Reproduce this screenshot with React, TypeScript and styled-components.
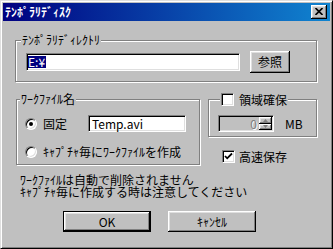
import React from "react";
import styled, { createGlobalStyle, css } from "styled-components";

const FONT = `"Noto Sans CJK JP", "Noto Sans", sans-serif`;

const GlobalStyle = createGlobalStyle`
    html, body {
        margin: 0;
        padding: 0;
        background: #c0c0c0;
    }
    body {
        font-family: ${FONT};
        font-size: 12px;
        color: #000;
    }
    * {
        box-sizing: border-box;
    }
`;

const raised = css`
    background: #c0c0c0;
    box-shadow:
        inset -1px -1px #000,
        inset 1px 1px #fff,
        inset -2px -2px #808080,
        inset 2px 2px #dfdfdf;
`;

const sunken = css`
    border: 1px solid;
    border-color: #808080 #fff #fff #808080;
    box-shadow:
        inset 1px 1px #000,
        inset -1px -1px #dfdfdf;
`;

const Window = styled.div`
    width: 333px;
    height: 249px;
    background: #c0c0c0;
    border: 1px solid;
    border-color: #dfdfdf #000 #000 #dfdfdf;
    padding: 2px;
    box-shadow:
        inset 1px 1px #fff,
        inset -1px -1px #808080;
    display: flex;
    flex-direction: column;
`;

const TitleBar = styled.div`
    height: 18px;
    flex-shrink: 0;
    display: flex;
    align-items: center;
    justify-content: space-between;
    padding: 0 3px 0 2px;
    background: linear-gradient(90deg, #000080, #1084d0);
`;

const Title = styled.span`
    color: #fff;
    font-weight: bold;
    line-height: 12px;
`;

const CloseBtn = styled.div`
    ${raised};
    width: 16px;
    height: 14px;
    display: flex;
    align-items: center;
    justify-content: center;
    svg {
        margin: -1px 0 0 -1px;
    }
`;

const Body = styled.div`
    display: flex;
    flex-direction: column;
    padding: 19px 13px 0 12px;
`;

const Group = styled.div<{ $h: number }>`
    position: relative;
    height: ${({ $h }) => $h}px;
    border: 1px solid #808080;
    box-shadow:
        inset 1px 1px #fff,
        1px 1px #fff;
`;

const Caption = styled.div<{ $left: number }>`
    position: absolute;
    top: -7px;
    left: ${({ $left }) => $left}px;
    display: flex;
    align-items: center;
    gap: 5px;
    padding: 0 1px;
    line-height: 12px;
    background: #c0c0c0;
    white-space: nowrap;
`;

const DirRow = styled.div`
    display: flex;
    align-items: center;
    gap: 10px;
    padding: 10px 0 0 10px;
`;

const Field = styled.div<{ $w: number; $h?: number; $pad?: number }>`
    ${sunken};
    width: ${({ $w }) => $w}px;
    height: ${({ $h = 18 }) => $h}px;
    background: #fff;
    display: flex;
    align-items: center;
    padding-left: ${({ $pad = 3 }) => $pad}px;
    line-height: 12px;
    white-space: nowrap;
`;

const Selected = styled.span`
    background: #000080;
    color: #fff;
    padding-right: 1px;
`;

const Button = styled.div<{ $w: number; $h: number; $default?: boolean }>`
    ${raised};
    width: ${({ $w }) => $w}px;
    height: ${({ $h }) => $h}px;
    display: flex;
    align-items: center;
    justify-content: center;
    line-height: 12px;
    ${({ $default }) =>
        $default &&
        css`
            border: 1px solid #000;
        `}
`;

const Columns = styled.div`
    display: flex;
    margin-top: 17px;
`;

const FileGroup = styled(Group)`
    width: 184px;
    margin-left: 1px;
    display: flex;
    flex-direction: column;
    gap: 11px;
    padding: 15px 0 0 8px;
`;

const OptRow = styled.div`
    display: flex;
    align-items: center;
    height: 17px;
`;

const Radio = styled.span<{ $on?: boolean }>`
    width: 12px;
    height: 12px;
    flex-shrink: 0;
    border-radius: 50%;
    background: #fff;
    border: 1px solid;
    border-color: #808080 #fff #fff #808080;
    box-shadow:
        inset 1px 1px #000,
        inset -1px -1px #dfdfdf;
    display: flex;
    align-items: center;
    justify-content: center;
    &::after {
        content: "";
        width: 4px;
        height: 4px;
        border-radius: 50%;
        background: ${({ $on }) => ($on ? "#000" : "transparent")};
    }
`;

const OptLabel = styled.span<{ $w?: number }>`
    margin-left: 6px;
    line-height: 12px;
    white-space: nowrap;
    ${({ $w }) =>
        $w &&
        css`
            width: ${$w}px;
        `}
`;

const RightCol = styled.div`
    flex: 1;
    display: flex;
    flex-direction: column;
    margin-left: 8px;
`;

const AreaGroup = styled(Group)`
    display: flex;
    align-items: flex-start;
    gap: 11px;
    padding: 15px 0 0 9px;
`;

const Check = styled.span`
    ${sunken};
    width: 13px;
    height: 13px;
    flex-shrink: 0;
    background: #fff;
    display: flex;
    align-items: center;
    justify-content: center;
`;

const Spin = styled.div`
    ${sunken};
    width: 56px;
    height: 17px;
    background: #c0c0c0;
    display: flex;
    padding: 1px;
`;

const SpinValue = styled.span`
    flex: 1;
    text-align: right;
    padding-right: 2px;
    line-height: 13px;
    color: #808080;
    text-shadow: 1px 1px #fff;
`;

const SpinBtns = styled.div`
    width: 13px;
    display: flex;
    flex-direction: column;
`;

const SpinBtn = styled.div`
    ${raised};
    flex: 1;
    display: flex;
    align-items: center;
    justify-content: center;
`;

const Unit = styled.span`
    line-height: 17px;
`;

const FastRow = styled.div`
    display: flex;
    align-items: center;
    gap: 4px;
    margin: 13px 0 0 14px;
    line-height: 13px;
`;

const Note = styled.div`
    margin: 9px 0 0 5px;
    line-height: 12px;
    white-space: pre;
`;

const Actions = styled.div`
    display: flex;
    gap: 17px;
    margin: 13px 0 0 48px;
`;

const CheckMark = () => (
    <svg width="9" height="9" viewBox="0 0 9 9">
        <path d="M1 4 L3.2 6.3 L8 1.5" stroke="#000" strokeWidth="1.8" fill="none" />
    </svg>
);

const Arrow = ({ up }: { up?: boolean }) => (
    <svg width="5" height="3" viewBox="0 0 5 3">
        <path d={up ? "M0 3 L2.5 0 L5 3 Z" : "M0 0 L2.5 3 L5 0 Z"} fill="#808080" />
    </svg>
);

export default function App() {
    return (
        <>
            <GlobalStyle />
            <Window>
                <TitleBar>
                    <Title>ﾃﾝﾎﾟﾗﾘﾃﾞｨｽｸ</Title>
                    <CloseBtn>
                        <svg width="8" height="7" viewBox="0 0 8 7">
                            <path d="M0.5 0 L7.5 7 M7.5 0 L0.5 7" stroke="#000" strokeWidth="1.6" />
                        </svg>
                    </CloseBtn>
                </TitleBar>
                <Body>
                    <Group $h={42}>
                        <Caption $left={5}>ﾃﾝﾎﾟﾗﾘﾃﾞｨﾚｸﾄﾘ</Caption>
                        <DirRow>
                            <Field $w={214} $pad={1}>
                                <Selected>E:¥</Selected>
                            </Field>
                            <Button $w={40} $h={22}>参照</Button>
                        </DirRow>
                    </Group>

                    <Columns>
                        <FileGroup $h={66}>
                            <Caption $left={3}>ﾜｰｸﾌｧｲﾙ名</Caption>
                            <OptRow>
                                <Radio $on />
                                <OptLabel $w={45}>固定</OptLabel>
                                <Field $w={98} $h={17}>Temp.avi</Field>
                            </OptRow>
                            <OptRow>
                                <Radio />
                                <OptLabel>ｷｬﾌﾟﾁｬ毎にﾜｰｸﾌｧｲﾙを作成</OptLabel>
                            </OptRow>
                        </FileGroup>

                        <RightCol>
                            <AreaGroup $h={38}>
                                <Caption $left={11}>
                                    <Check />
                                    領域確保
                                </Caption>
                                <Spin>
                                    <SpinValue>0</SpinValue>
                                    <SpinBtns>
                                        <SpinBtn>
                                            <Arrow up />
                                        </SpinBtn>
                                        <SpinBtn>
                                            <Arrow />
                                        </SpinBtn>
                                    </SpinBtns>
                                </Spin>
                                <Unit>MB</Unit>
                            </AreaGroup>
                            <FastRow>
                                <Check>
                                    <CheckMark />
                                </Check>
                                高速保存
                            </FastRow>
                        </RightCol>
                    </Columns>

                    <Note>
                        {"ﾜｰｸﾌｧｲﾙは自動で削除されません\nｷｬﾌﾟﾁｬ毎に作成する時は注意してください"}
                    </Note>

                    <Actions>
                        <Button $w={88} $h={21} $default>OK</Button>
                        <Button $w={88} $h={21}>ｷｬﾝｾﾙ</Button>
                    </Actions>
                </Body>
            </Window>
        </>
    );
}
